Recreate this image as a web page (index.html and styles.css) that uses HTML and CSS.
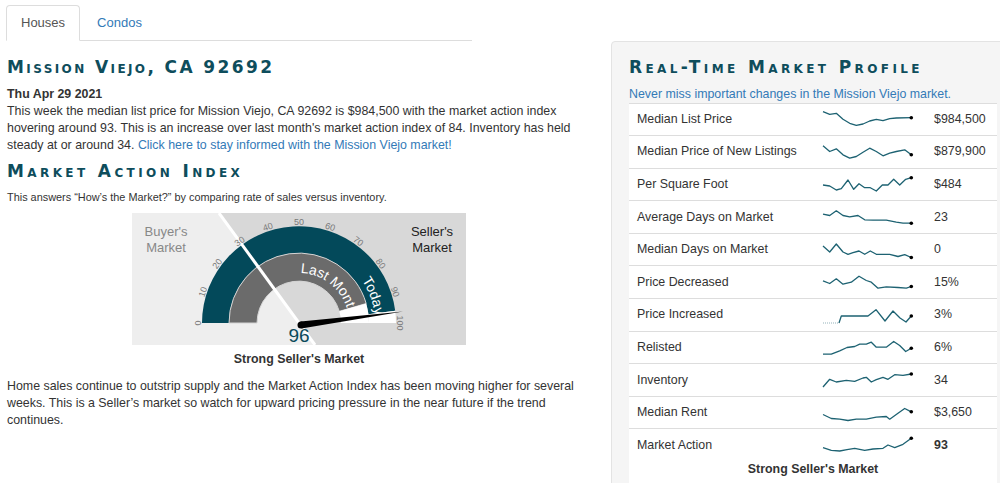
FILE: index.html
```html
<!DOCTYPE html>
<html lang="en">
<head>
<meta charset="utf-8">
<title>Mission Viejo, CA 92692 – Market Profile</title>
<link rel="stylesheet" href="styles.css">
</head>
<body>
<div class="page">
  <main class="main">
    <nav class="tabs">
      <a class="tab active">Houses</a>
      <a class="tab">Condos</a>
    </nav>
    <h1 class="title title--city">Mission Viejo, CA 92692</h1>
    <p class="date">Thu Apr 29 2021</p>
    <p class="lead">This week the median list price for Mission Viejo, CA 92692 is $984,500 with the market action index hovering around 93. This is an increase over last month's market action index of 84. Inventory has held steady at or around 34. <a href="#">Click here to stay informed with the Mission Viejo market!</a></p>
    <h2 class="title title--section">Market Action Index</h2>
    <p class="note">This answers “How’s the Market?” by comparing rate of sales versus inventory.</p>
    <div class="gauge">
      <svg class="gauge-svg" width="334" height="132" viewBox="133 213 334 132">
        <defs>
          <path id="arcLast" d="M250,323 A50,50 0 0 1 350,323"/>
          <path id="arcToday" d="M224,323 A76,76 0 0 1 376,323"/>
        </defs>
        <rect x="133" y="213" width="334" height="132" class="g-bg-buyer"/>
        <polygon points="220,213 467,213 467,345 316,345" class="g-bg-seller"/>
        <path d="M203,323 A97,97 0 0 1 396.2,310.8 L369.4,314.2 A70,70 0 0 0 230,323 Z" class="g-today"/>
        <path d="M230,323 A70,70 0 0 1 367.2,303.5 L340.3,311.3 A42,42 0 0 0 258,323 Z" class="g-last"/>
        <text class="g-arc"><textPath href="#arcLast" startOffset="80">Last Month</textPath></text>
        <text class="g-arc"><textPath href="#arcToday" startOffset="193">Today</textPath></text>
        <path d="M396.2,310.8 A97,97 0 0 1 397,323 L370,323 A70,70 0 0 0 369.4,314.2 Z" class="g-empty"/>
        <path d="M367.2,303.5 A70,70 0 0 1 370,323 L342,323 A42,42 0 0 0 340.3,311.3 Z" class="g-empty"/>
        <line x1="220" y1="213" x2="316" y2="345" class="g-divider"/>
        <g class="g-ticks">
          <text x="300" y="225" transform="rotate(-90 300 323)">0</text>
          <text x="300" y="225" transform="rotate(-72 300 323)">10</text>
          <text x="300" y="225" transform="rotate(-54 300 323)">20</text>
          <text x="300" y="225" transform="rotate(-36 300 323)">30</text>
          <text x="300" y="225" transform="rotate(-18 300 323)">40</text>
          <text x="300" y="225">50</text>
          <text x="300" y="225" transform="rotate(18 300 323)">60</text>
          <text x="300" y="225" transform="rotate(36 300 323)">70</text>
          <text x="300" y="225" transform="rotate(54 300 323)">80</text>
          <text x="300" y="225" transform="rotate(72 300 323)">90</text>
          <text x="300" y="225" transform="rotate(90 300 323)">100</text>
        </g>
        <text x="167" y="236" class="g-side g-buyer">Buyer's</text>
        <text x="167" y="252" class="g-side g-buyer">Market</text>
        <text x="433" y="236" class="g-side g-seller">Seller's</text>
        <text x="433" y="252" class="g-side g-seller">Market</text>
        <polygon points="301.6,321.5 404,311.5 302.4,328.5" class="g-needle"/>
        <circle cx="302" cy="325" r="3.5" class="g-needle"/>
        <text x="300" y="342" class="g-value">96</text>
      </svg>
    </div>
    <p class="verdict">Strong Seller's Market</p>
    <p class="summary">Home sales continue to outstrip supply and the Market Action Index has been moving higher for several weeks. This is a Seller’s market so watch for upward pricing pressure in the near future if the trend continues.</p>
  </main>

  <aside class="side">
    <div class="well">
      <h2 class="title title--panel">Real-Time Market Profile</h2>
      <a class="notify" href="#">Never miss important changes in the Mission Viejo market.</a>
      <div class="stats">
        <div class="row">
          <span class="label">Median List Price</span>
          <svg class="spark" viewBox="0 0 89 20"><polyline points="0,2.7 6.7,5.3 13.3,4.3 20,10.3 26.7,14.3 33.3,16.3 40,15 46.7,12 53.3,10.3 60,11.7 66.7,9.7 73.3,9 88.3,8.7"/><circle cx="88.3" cy="8.7" r="1.8"/></svg>
          <span class="val">$984,500</span>
        </div>
        <div class="row">
          <span class="label">Median Price of New Listings</span>
          <svg class="spark" viewBox="0 0 89 20"><polyline points="0,3.8 6.7,9.5 13.3,6.8 20,12.8 26.7,16.2 33.3,14.5 40,10.2 46.7,6.2 53.3,9.5 60,13.8 66.7,11.2 73.3,9.5 81.7,7.8 88.3,12.8"/><circle cx="88.3" cy="12.8" r="1.8"/></svg>
          <span class="val">$879,900</span>
        </div>
        <div class="row">
          <span class="label">Per Square Foot</span>
          <svg class="spark" viewBox="0 0 89 20"><polyline points="0,11 6.7,12 13.3,16 18.3,14.7 25,6 30.7,15.3 36,9.7 41.7,13.7 47.3,13.7 53.3,17 59.3,11 65,11 70.7,5.3 76.7,11 82.7,5.3 88.3,3.7"/><circle cx="88.3" cy="3.7" r="1.8"/></svg>
          <span class="val">$484</span>
        </div>
        <div class="row">
          <span class="label">Average Days on Market</span>
          <svg class="spark" viewBox="0 0 89 20"><polyline points="0,7.2 6.7,8.5 13.3,3.8 20,8.5 26.7,9.8 35,8.5 41.7,12.8 50,13.2 63.3,13.2 73.3,15.2 80,16.2 88.3,16.2"/><circle cx="88.3" cy="16.2" r="1.8"/></svg>
          <span class="val">23</span>
        </div>
        <div class="row">
          <span class="label">Median Days on Market</span>
          <svg class="spark" viewBox="0 0 89 20"><polyline points="0,6 6.7,12 13.3,4 20,12 25,14.3 30,12.7 36,11 41.7,14.3 47.3,11 53.3,14.3 66.7,14.3 75,16.5 81.7,14.7 88.3,17.5"/><circle cx="88.3" cy="17.5" r="1.8"/></svg>
          <span class="val">0</span>
        </div>
        <div class="row">
          <span class="label">Price Decreased</span>
          <svg class="spark" viewBox="0 0 89 20"><polyline points="0,8.8 6.7,11.5 13.3,6.8 20,12.2 28.3,10.2 36,4.2 43.3,8.5 48.3,10.2 55,16.2 63.3,14.8 75,15.5 83.3,16.2 88.3,14.5"/><circle cx="88.3" cy="14.5" r="1.8"/></svg>
          <span class="val">15%</span>
        </div>
        <div class="row">
          <span class="label">Price Increased</span>
          <svg class="spark" viewBox="0 0 89 20"><polyline class="faint" points="0,18 16,18"/><polyline points="16,18 18.3,11 45,11 53,4.7 62,16 70,6 77,13 83,17 88.3,11"/><circle cx="88.3" cy="11" r="1.8"/></svg>
          <span class="val">3%</span>
        </div>
        <div class="row">
          <span class="label">Relisted</span>
          <svg class="spark" viewBox="0 0 89 20"><polyline points="0,17.2 8.3,17.2 16.7,13.8 24,10.5 31.7,9.5 36.7,7.2 43.3,7.2 48.3,5.2 53.3,10.2 63.3,10.2 70.7,4.5 76.7,8.5 82.7,14.5 88.3,11.2"/><circle cx="88.3" cy="11.2" r="1.8"/></svg>
          <span class="val">6%</span>
        </div>
        <div class="row">
          <span class="label">Inventory</span>
          <svg class="spark" viewBox="0 0 89 20"><polyline points="0,17 6.7,9.3 13.3,12 23.3,10.3 31.7,11.3 40,8 43.3,7.3 48.3,12 53.3,9.7 60,7.3 65,9.3 71.7,4.7 80,5.3 88.3,4"/><circle cx="88.3" cy="4" r="1.8"/></svg>
          <span class="val">34</span>
        </div>
        <div class="row">
          <span class="label">Median Rent</span>
          <svg class="spark" viewBox="0 0 89 20"><polyline points="0,11.5 8.3,15.5 16.7,16.2 25,17.5 33.3,16.2 43.3,16.2 53.3,14.2 63.3,13.5 66.7,16.2 75,10.2 81.7,5.5 88.3,8.8"/><circle cx="88.3" cy="8.8" r="1.8"/></svg>
          <span class="val">$3,650</span>
        </div>
        <div class="row">
          <span class="label">Market Action</span>
          <svg class="spark" viewBox="0 0 89 20"><polyline points="0,12.7 8.3,15.3 16.7,16 24,14.7 31.7,13.3 41.7,15.3 50,14 60,13.3 65,10 71.7,12.7 80,9.3 88.3,3.3"/><circle cx="88.3" cy="3.3" r="1.8"/></svg>
          <span class="val val--strong">93</span>
        </div>
        <p class="verdict verdict--panel">Strong Seller's Market</p>
      </div>
    </div>
  </aside>
</div>
</body>
</html>
```

FILE: styles.css
```css
html, body {
  margin: 0;
  overflow: hidden;
}

body {
  font-family: "Liberation Sans", Arial, sans-serif;
  font-size: 12.4px;
  line-height: 17px;
  color: #333;
  background: #fff;
}

a {
  color: #337ab7;
  text-decoration: none;
}

.page {
  display: flex;
  align-items: flex-start;
}

/* ---------- left column ---------- */
.main {
  flex: none;
  width: 584px;
  margin-left: 7px;
  padding-top: 5px;
}

.tabs {
  display: flex;
  width: 466px;
  margin-left: -1px;
  border-bottom: 1px solid #ddd;
}

.tab {
  padding: 8px 14px 9px;
  border: 1px solid transparent;
  border-radius: 4px 4px 0 0;
  margin: 0 2px -1px 0;
  color: #337ab7;
  font-size: 13px;
}

.tab.active {
  color: #555;
  background: #fff;
  border-color: #ddd #ddd transparent;
}

.title {
  font-family: "DejaVu Sans", sans-serif;
  font-variant: small-caps;
  font-weight: bold;
  font-size: 17px;
  line-height: 24px;
  letter-spacing: 2.4px;
  color: #0e4d5c;
  margin: 14px 0 7px;
}

.title--section {
  margin: 5px 0 0;
  letter-spacing: 3.4px;
}

.title--panel {
  margin: 0 0 6.5px;
  letter-spacing: 3.4px;
}

.date {
  margin: 0;
  font-weight: bold;
}

.lead {
  margin: 0;
}

.note {
  margin: 7px 0 0;
  font-size: 10.9px;
  line-height: 15px;
}

.gauge {
  display: flex;
  justify-content: center;
  margin-top: 8px;
}

.gauge-svg {
  display: block;
}

.g-bg-buyer { fill: #eeeeee; }
.g-bg-seller { fill: #d8d8d8; }
.g-today { fill: #03495a; }
.g-last { fill: #6b6b6b; stroke: #d4d4d4; stroke-width: 1; }
.g-empty { fill: #fff; }

.g-arc {
  font-family: "Liberation Sans", Arial, sans-serif;
  font-size: 14px;
  fill: #fff;
}

.g-ticks text {
  font-family: "Liberation Sans", Arial, sans-serif;
  font-size: 9px;
  fill: #7a7a7a;
  text-anchor: middle;
}

.g-divider {
  stroke: #fff;
  stroke-width: 3;
}

.g-side {
  font-family: "Liberation Sans", Arial, sans-serif;
  font-size: 13px;
  text-anchor: middle;
}

.g-buyer { fill: #888; }
.g-seller { fill: #222; }

.g-needle { fill: #000; }

.g-value {
  font-family: "Liberation Sans", Arial, sans-serif;
  font-size: 19px;
  fill: #0b4a5a;
  text-anchor: middle;
}

.verdict {
  margin: 6px 0 0;
  text-align: center;
  font-weight: bold;
}

.summary {
  margin: 10px 0 0;
}

/* ---------- right panel ---------- */
.side {
  flex: none;
  width: 404px;
  margin-left: 20px;
  padding-top: 41px;
}

.well {
  border: 1px solid #e3e3e3;
  border-radius: 4px;
  background: #f5f5f5;
  padding: 13px 17px 20px;
}

.notify {
  display: block;
}

.stats {
  background: #fff;
}

.row {
  display: flex;
  align-items: center;
  height: 32.6px;
  box-sizing: border-box;
  border-top: 1px solid #ddd;
}

.label {
  flex: none;
  width: 194px;
  padding-left: 8px;
  box-sizing: border-box;
}

.spark {
  flex: none;
  width: 89px;
  height: 20px;
  margin-right: 22px;
  overflow: visible;
}

.spark polyline {
  fill: none;
  stroke: #1d6272;
  stroke-width: 1.3;
  stroke-linejoin: round;
}

.spark polyline.faint {
  stroke: #b9cdd2;
  stroke-dasharray: 1 1;
}

.spark circle {
  fill: #000;
}

.val--strong {
  font-weight: bold;
}

.verdict--panel {
  margin: 0;
  padding-bottom: 8px;
}
```
